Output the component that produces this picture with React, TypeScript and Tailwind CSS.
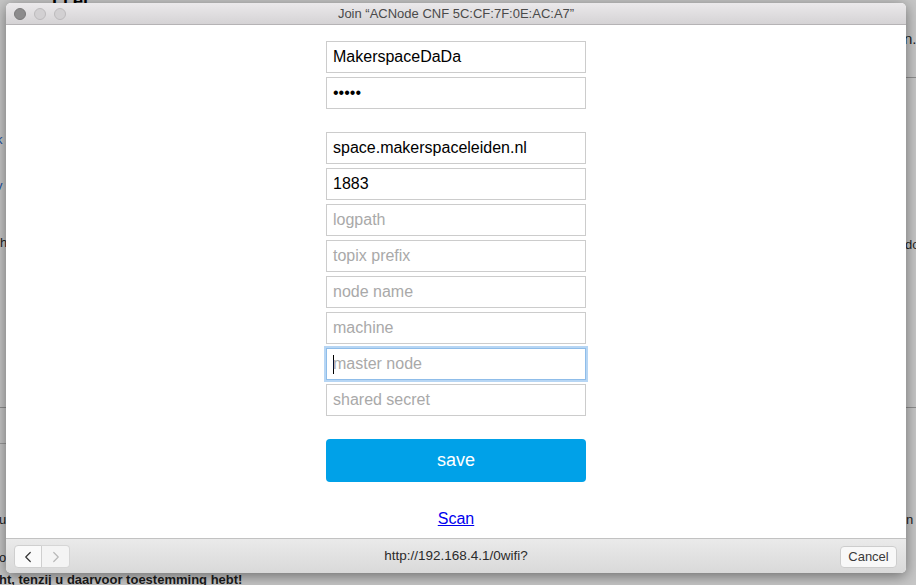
import { ChevronLeft, ChevronRight } from "lucide-react";

const fields = [
  { value: "MakerspaceDaDa" },
  { value: "•••••", password: true },
  { value: "space.makerspaceleiden.nl", gapBefore: true },
  { value: "1883" },
  { placeholder: "logpath" },
  { placeholder: "topix prefix" },
  { placeholder: "node name" },
  { placeholder: "machine" },
  { placeholder: "master node", focused: true },
  { placeholder: "shared secret" },
];

const Field = ({ value, placeholder, focused, gapBefore }: { value?: string; placeholder?: string; focused?: boolean; gapBefore?: boolean }) => (
  <div
    className={
      "w-[260px] h-[32px] flex items-center px-[6px] bg-white text-[16px] " +
      (gapBefore ? "mt-[23px] " : "mt-[4px] ") +
      (focused ? "border border-[#8fbde9] ring-[2px] ring-[#b7d6f4]" : "border border-[#cccccc]")
    }
  >
    {focused && <span className="w-px h-[19px] bg-black -mr-px"></span>}
    {value ? <span className="text-black">{value}</span> : <span className="text-[#a9a9a9]">{placeholder}</span>}
  </div>
);

const App = () => {
  return (
    <div className="relative w-[916px] h-[585px] overflow-hidden bg-[#c6c6c6]" style={{ fontFamily: '"Liberation Sans", Arial, sans-serif' }}>
      {/* dimmed page behind the sheet */}
      <div className="absolute left-[52px] top-[-12px] text-[18px] font-bold text-black">Lj ej</div>
      <div className="absolute left-[-4px] top-[130px] text-[13px] text-[#1a4fa0]">k</div>
      <div className="absolute left-[-4px] top-[176px] text-[13px] text-[#1a4fa0]">v</div>
      <div className="absolute left-[0px] top-[233px] text-[13px] text-[#222]">h</div>
      <div className="absolute left-[-4px] top-[510px] text-[13px] text-[#222]">ju</div>
      <div className="absolute left-[-1px] top-[548px] text-[13px] text-[#222]">o</div>
      <div className="absolute left-0 top-[407px] w-[10px] h-px bg-[#8e8e8e]"></div>
      <div className="absolute left-0 top-[443px] w-[10px] h-px bg-[#9a9a9a]"></div>
      <div className="absolute right-0 top-[77px] w-[12px] h-px bg-[#8e8e8e]"></div>
      <div className="absolute right-0 top-[407px] w-[12px] h-px bg-[#8e8e8e]"></div>
      <div className="absolute left-[904px] top-[28px] text-[15px] text-[#222]">n.</div>
      <div className="absolute left-[905px] top-[235px] text-[13px] text-[#222]">do</div>
      <div className="absolute left-[906px] top-[510px] text-[13px] text-[#222]">n</div>
      <div className="absolute left-[-1px] top-[570px] text-[13px] font-bold text-[#1b1b1b] whitespace-nowrap">ht, tenzij u daarvoor toestemming hebt!</div>

      {/* sheet window */}
      <div className="absolute left-[6px] top-[3px] w-[900px] h-[570px] flex flex-col rounded-[5px] overflow-hidden bg-white shadow-[0_3px_14px_rgba(0,0,0,0.45)]">
        <div className="relative h-[22px] shrink-0 flex items-center justify-center bg-gradient-to-b from-[#ebe9eb] to-[#d5d3d5] border-b border-[#b5b3b5]">
          <div className="absolute left-[8px] top-[5px] flex gap-[8px]">
            <span className="w-[12px] h-[12px] rounded-full bg-[#8c8b8c] border border-[#7a797a]"></span>
            <span className="w-[12px] h-[12px] rounded-full bg-[#d2d0d2] border border-[#bcbabc]"></span>
            <span className="w-[12px] h-[12px] rounded-full bg-[#d2d0d2] border border-[#bcbabc]"></span>
          </div>
          <span className="text-[13px] text-[#4a4a4a]">Join “ACNode CNF 5C:CF:7F:0E:AC:A7”</span>
        </div>

        <div className="flex-1 flex flex-col items-center pt-[12px]">
          {fields.map((f, i) => (
            <Field key={i} value={f.value} placeholder={f.placeholder} focused={f.focused} gapBefore={f.gapBefore} />
          ))}
          <button className="mt-[23px] w-[260px] h-[43px] rounded-[4px] bg-[#00a1e8] text-white text-[18px]">save</button>
          <a className="mt-[25px] text-[16px] text-[#0000ee] underline" href="#">Scan</a>
        </div>

        <div className="relative h-[35px] shrink-0 flex items-center justify-center bg-gradient-to-b from-[#eaeaea] to-[#d9d9d9] border-t border-[#c2c2c2]">
          <div className="absolute left-[8px] top-[6px] flex">
            <span className="w-[28px] h-[23px] flex items-center justify-center bg-[#fafafa] border border-[#cfcfcf] rounded-l-[4px]">
              <ChevronLeft size={18} strokeWidth={1.6} className="text-[#333]" />
            </span>
            <span className="w-[28px] h-[23px] flex items-center justify-center bg-[#f4f4f4] border border-l-0 border-[#d6d6d6] rounded-r-[4px]">
              <ChevronRight size={18} strokeWidth={1.6} className="text-[#b8b8b8]" />
            </span>
          </div>
          <span className="text-[13.5px] text-[#2b2b2b]">http://192.168.4.1/0wifi?</span>
          <button className="absolute right-[9px] top-[7px] w-[57px] h-[22px] rounded-[4px] bg-[#f8f8f8] border border-[#cdcdcd] text-[13px] text-[#3a3a3a]">Cancel</button>
        </div>
      </div>
    </div>
  );
};

export default App;
